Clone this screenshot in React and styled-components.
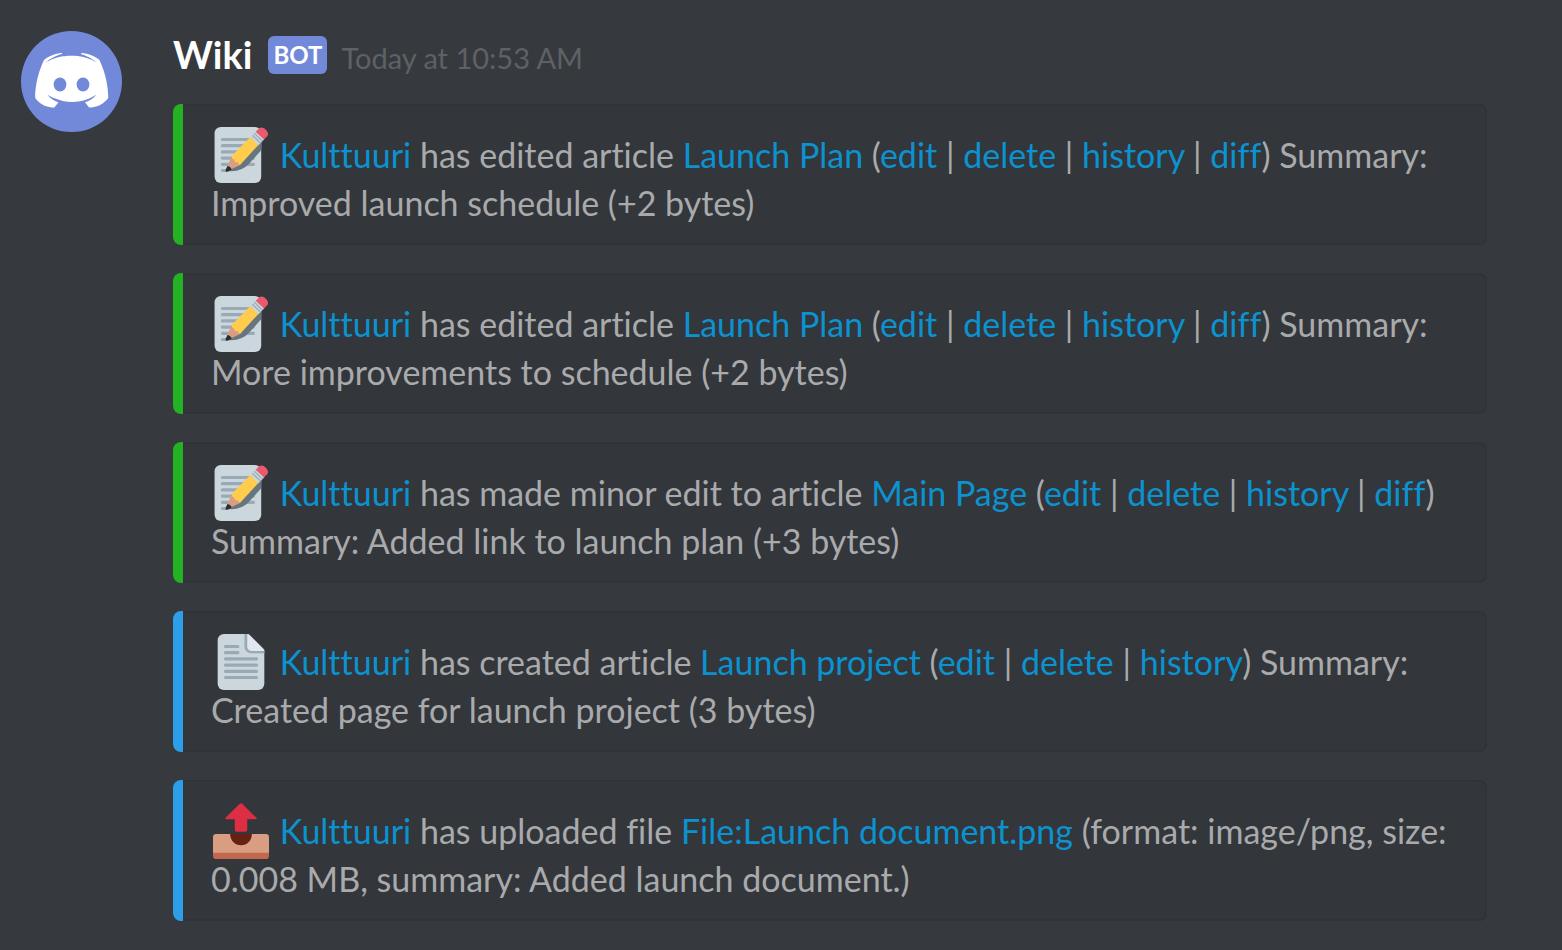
import React from "react";
import styled, { createGlobalStyle } from "styled-components";

const GlobalStyle = createGlobalStyle`
  * { box-sizing: border-box; }
  body {
    margin: 0;
    background: #36393e;
    color: #a9aaac;
    font-family: Lato, "Open Sans", sans-serif;
    font-variant-ligatures: none;
  }
`;

const Message = styled.article`
  display: flex;
  align-items: flex-start;
  gap: 51px;
  padding: 31px 75px 28px 21px;
`;

const Avatar = styled.svg`
  flex: none;
  width: 101px;
  height: 101px;
`;

const Body = styled.div`
  flex: 1;
  min-width: 0;
`;

const Header = styled.header`
  display: flex;
  align-items: baseline;
  height: 73px;
  line-height: 46px;
`;

const Author = styled.h1`
  margin: 0;
  color: #fff;
  font-size: 38px;
  font-weight: 700;
`;

const BotTag = styled.span`
  align-self: flex-start;
  margin: 5px 14px 0 16px;
  padding: 0 5px;
  border-radius: 6px;
  background: #7289da;
  color: #fff;
  font-size: 24px;
  font-weight: 700;
  line-height: 38px;
`;

const Time = styled.time`
  color: #5e6165;
  font-size: 29px;
`;

const Embeds = styled.ul`
  display: flex;
  flex-direction: column;
  gap: 28px;
  margin: 0;
  padding: 0;
  list-style: none;
`;

const Embed = styled.li`
  display: flex;
  border-radius: 8px;
  background: #33363b;
  box-shadow: inset 0 0 0 2px #303338;
  overflow: hidden;

  &::before {
    content: "";
    flex: none;
    width: 10px;
    background: ${(p) => p.$accent};
  }
`;

const Text = styled.p`
  margin: 0;
  padding: 27px 34px 18px 28px;
  font-size: 34px;
  line-height: 48px;
`;

const Link = styled.a`
  color: #0b92cf;
  text-decoration: none;
  &:hover { text-decoration: underline; }
`;

const Emoji = styled.svg`
  width: 56px;
  height: 56px;
  margin: -8px 2px;
  vertical-align: -7px;
`;

function Memo() {
  return (
    <Emoji viewBox="0 0 36 36" role="img" aria-label="memo">
      <rect x="1" width="30" height="36" rx="4" fill="#ccd6dd" />
      <path d="M6 8h20M6 12h20M6 16h20M6 20h20M6 24h20M6 28h4" stroke="#99aab5" strokeWidth="2" strokeLinecap="round" />
      <path d="M31 8.5 18 21.5 9 28.2q4.500 1 9.500-1.200Q21 26 23 23.800L31 15z" fill="#66757f" />
      <path d="m12 19-3.800 8.500q-.2 1 .8.900l8.700-4.200z" fill="#d99e82" />
      <path d="m9.300 25-1.200 2.700q-.3 1.200.9 1l3-1.200q-.4-2-2.700-2.500z" fill="#292f33" />
      <path d="M12 18.700 24 6.500l5.200 5L17.500 24.300q-1 .3-1.500-1.600-2.300.3-2.300-1.700-2-.5-1.700-2.300z" fill="#ffcc4d" />
      <path d="m24 6.500 3.600-3.600 5.400 5-3.800 3.800z" fill="#ccd6dd" />
      <path d="m25.300 5.300 5.200 5m-4-6.300 5.200 5" stroke="#99aab5" strokeWidth=".8" />
      <path d="m27.400 3 2-1.900c1.400-1.300 3.200-.7 4.500.6 1.500 1.500 2 3 .9 4.200l-2 2.100z" fill="#ea596e" />
    </Emoji>
  );
}

function Page() {
  return (
    <Emoji viewBox="0 0 36 36" role="img" aria-label="page">
      <path d="M7 0h15l11 11v21a4 4 0 0 1-4 4H7a4 4 0 0 1-4-4V4a4 4 0 0 1 4-4z" fill="#ccd6dd" />
      <path d="M20.200 0H23l10 10v2.300H24.500a4.300 4.300 0 0 1-4.300-4.300z" fill="#99aab5" />
      <path d="M22 0q.7 0 1.400.6l9 9q.6.7.6 1.400h-8a3 3 0 0 1-3-3z" fill="#e1e8ed" />
      <path d="M8 8h8M8 12h8M8 16h20M8 20h20M8 24h20M8 28h20" stroke="#99aab5" strokeWidth="2" strokeLinecap="round" />
    </Emoji>
  );
}

function Outbox() {
  return (
    <Emoji viewBox="0 0 36 36" role="img" aria-label="outbox">
      <path d="M0 30h36v4a2 2 0 0 1-2 2H2a2 2 0 0 1-2-2z" fill="#c1694f" />
      <path d="M2 20h32a2 2 0 0 1 2 2v10H0V22a2 2 0 0 1 2-2z" fill="#d99e82" />
      <path d="M11 20h14q0 3-2 5.100A7 7 0 0 1 13 25.100Q11 23 11 20z" fill="#662113" />
      <path d="M17.200.5q.8-.8 1.600 0l9 8.900q.8 1.100-.5 1.100H22v6.300q0 1.700-1.700 1.700h-4.600q-1.700 0-1.700-1.700v-6.300H8.700q-1.300 0-.5-1.100z" fill="#dd2e44" />
    </Emoji>
  );
}

const DISCORD_FACE =
  "M150.9 150.600s-3.600-4.300-6.600-8.100c13.100-3.700 18.100-11.900 18.100-11.900-4.100 2.700-8 4.600-11.500 5.900-5 2.100-9.800 3.500-14.500 4.300-9.600 1.800-18.400 1.300-25.900-.1-5.700-1.100-10.600-2.700-14.700-4.300-2.300-.9-4.800-2-7.300-3.400-.3-.2-.6-.3-.9-.5-.2-.1-.3-.2-.4-.3-1.800-1-2.800-1.700-2.800-1.700s4.800 8 17.500 11.800c-3 3.800-6.700 8.300-6.700 8.300-22.100-.7-30.500-15.200-30.500-15.200 0-32.200 14.400-58.300 14.400-58.300 14.400-10.800 28.100-10.500 28.100-10.500l1 1.200c-18 5.200-26.300 13.100-26.300 13.100s2.200-1.200 5.900-2.900c10.700-4.700 19.200-6 22.700-6.300.6-.1 1.100-.2 1.700-.2 6.100-.8 13-1 20.200-.2 9.500 1.100 19.700 3.900 30.100 9.600 0 0-7.900-7.500-24.900-12.700l1.400-1.600s13.700-.3 28.100 10.500c0 0 14.400 26.100 14.400 58.300 0 0-8.500 14.500-30.600 15.200z";

function DiscordAvatar() {
  return (
    <Avatar viewBox="0 0 101 101" role="img" aria-label="Wiki avatar">
      <circle cx="50.5" cy="50.5" r="50.5" fill="#7289da" />
      <path d={DISCORD_FACE} fill="#fff" transform="translate(50.8 22) scale(.626 .65) translate(-123.200 -66.600)" />
      <ellipse cx="39" cy="53.500" rx="6.400" ry="7" fill="#7289da" />
      <ellipse cx="62" cy="53.500" rx="6.400" ry="7" fill="#7289da" />
    </Avatar>
  );
}

const GREEN = "#24b224";
const BLUE = "#2d9fe8";

const EVENTS = [
  { icon: Memo, accent: GREEN, verb: "has edited article", target: "Launch Plan", actions: ["edit", "delete", "history", "diff"], detail: "Summary: Improved launch schedule (+2 bytes)" },
  { icon: Memo, accent: GREEN, verb: "has edited article", target: "Launch Plan", actions: ["edit", "delete", "history", "diff"], detail: "Summary: More improvements to schedule (+2 bytes)" },
  { icon: Memo, accent: GREEN, verb: "has made minor edit to article", target: "Main Page", actions: ["edit", "delete", "history", "diff"], detail: "Summary: Added link to launch plan (+3 bytes)" },
  { icon: Page, accent: BLUE, verb: "has created article", target: "Launch project", actions: ["edit", "delete", "history"], detail: "Summary: Created page for launch project (3 bytes)" },
  { icon: Outbox, accent: BLUE, verb: "has uploaded file", target: "File:Launch document.png", detail: "(format: image/png, size: 0.008 MB, summary: Added launch document.)" },
];

function Actions({ items }) {
  return (
    <>
      (
      {items.map((name, i) => (
        <React.Fragment key={name}>
          {i > 0 && " | "}
          <Link href="#">{name}</Link>
        </React.Fragment>
      ))}
      ){" "}
    </>
  );
}

export default function App() {
  return (
    <>
      <GlobalStyle />
      <Message>
        <DiscordAvatar />
        <Body>
          <Header>
            <Author>Wiki</Author>
            <BotTag>BOT</BotTag>
            <Time dateTime="10:53">Today at 10:53 AM</Time>
          </Header>
          <Embeds>
            {EVENTS.map(({ icon: Icon, accent, verb, target, actions, detail }, i) => (
              <Embed key={i} $accent={accent}>
                <Text>
                  <Icon /> <Link href="#">Kulttuuri</Link> {verb} <Link href="#">{target}</Link>{" "}
                  {actions && <Actions items={actions} />}
                  {detail}
                </Text>
              </Embed>
            ))}
          </Embeds>
        </Body>
      </Message>
    </>
  );
}
